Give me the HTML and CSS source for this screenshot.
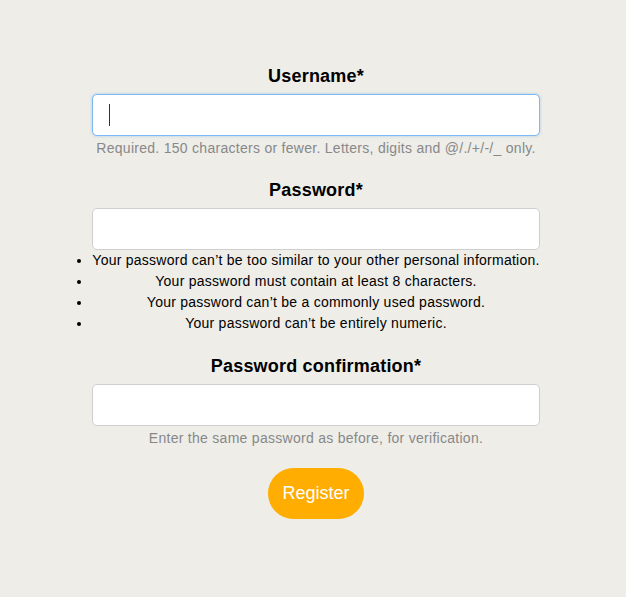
FILE: index.html
```html
<!DOCTYPE html>
<html lang="en">
<head>
<meta charset="utf-8">
<title>Register</title>
<link rel="stylesheet" href="styles.css">
</head>
<body>
<main class="page">
  <form class="form">
    <div class="field">
      <label class="label" for="username">Username*</label>
      <div class="input-wrap is-focused">
        <input class="input" id="username" type="text">
      </div>
      <p class="help">Required. 150 characters or fewer. Letters, digits and @/./+/-/_ only.</p>
    </div>
    <div class="field">
      <label class="label" for="password1">Password*</label>
      <div class="input-wrap">
        <input class="input" id="password1" type="password">
      </div>
      <ul class="rules">
        <li>Your password can’t be too similar to your other personal information.</li>
        <li>Your password must contain at least 8 characters.</li>
        <li>Your password can’t be a commonly used password.</li>
        <li>Your password can’t be entirely numeric.</li>
      </ul>
    </div>
    <div class="field">
      <label class="label" for="password2">Password confirmation*</label>
      <div class="input-wrap">
        <input class="input" id="password2" type="password">
      </div>
      <p class="help">Enter the same password as before, for verification.</p>
    </div>
    <div class="actions">
      <button class="button" type="button">Register</button>
    </div>
  </form>
</main>
</body>
</html>
```

FILE: styles.css
```css
html, body {
  margin: 0;
  padding: 0;
  background: #eeede8;
}

body {
  font-family: "Liberation Sans", Arial, sans-serif;
  color: #000;
}

.page {
  display: flex;
  justify-content: center;
  padding: 66px 86px 0 92px;
}

.form {
  width: 448px;
  display: flex;
  flex-direction: column;
}

.field {
  display: flex;
  flex-direction: column;
  align-items: stretch;
  text-align: center;
}

.field + .field {
  margin-top: 24px;
}

.field:nth-child(3) {
  margin-top: 22px;
}

.label {
  display: block;
  font-size: 18px;
  font-weight: bold;
  line-height: 21px;
  letter-spacing: 0.2px;
  margin-bottom: 7px;
}

.input-wrap {
  position: relative;
}

.input {
  display: block;
  box-sizing: border-box;
  width: 448px;
  height: 42px;
  margin: 0;
  padding: 0 16px;
  border: 1px solid #cfcfcf;
  border-radius: 5px;
  background: #fff;
  font: 14px "Liberation Sans", Arial, sans-serif;
  outline: none;
}

.is-focused .input {
  border-color: #7cb9f2;
  box-shadow: 0 0 3px rgba(110, 170, 230, 0.55);
}

.is-focused::after {
  content: "";
  position: absolute;
  left: 17px;
  top: 10px;
  width: 1px;
  height: 22px;
  background: #333;
}

.help {
  margin: 4px 0 0;
  font-size: 14px;
  line-height: 16px;
  letter-spacing: 0.28px;
  color: #888;
}

.rules {
  margin: 0;
  padding: 0;
  list-style: disc outside;
  font-size: 14px;
  line-height: 21px;
  letter-spacing: 0.25px;
  color: #000;
}

.rules li {
  text-align: center;
}

.actions {
  display: flex;
  justify-content: center;
  margin-top: 22px;
}

.button {
  height: 51px;
  padding: 0 14px;
  border: none;
  border-radius: 26px;
  background: #ffad00;
  color: #fff;
  font: 18px "Liberation Sans", Arial, sans-serif;
  cursor: pointer;
}
```
